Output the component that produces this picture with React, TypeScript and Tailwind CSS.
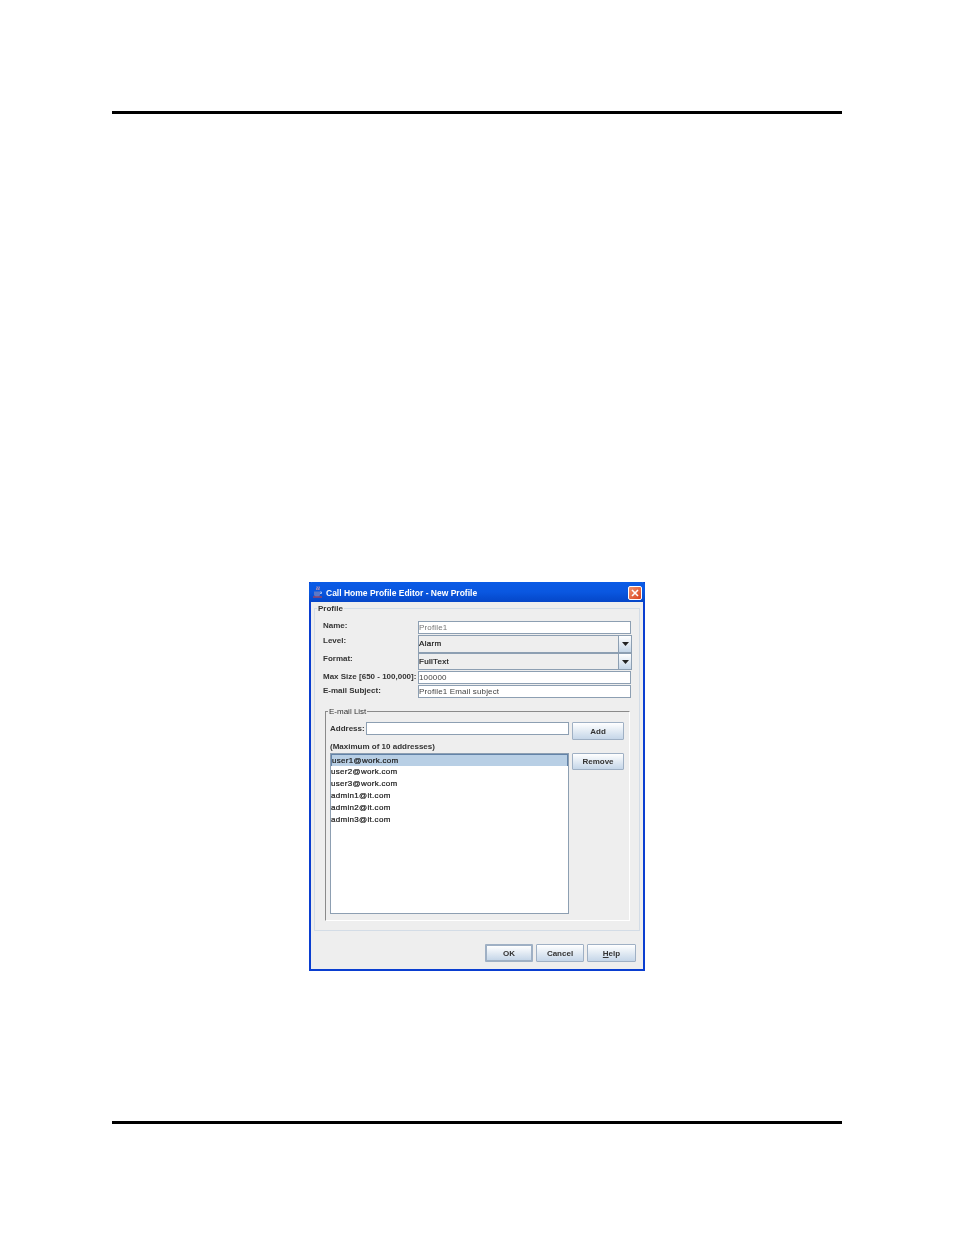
const labelText = "font-['Liberation_Sans',Arial,sans-serif] text-[8px] font-bold text-[#333] leading-[10px]";
const fieldText = "font-['Liberation_Sans',Arial,sans-serif] text-[8px] text-[#444] tracking-[0.15px] leading-[10px]";
const heavyText = "font-['Liberation_Sans',Arial,sans-serif] text-[8px] text-[#111] [-webkit-text-stroke:0.2px_#222]";
const buttonClass =
  "flex items-center justify-center pt-[1px] border border-[#9fb0c4] rounded-[1px] bg-gradient-to-b from-white to-[#c5d6e8] font-['Liberation_Sans',Arial,sans-serif] text-[8px] font-bold text-[#333]";

const addresses = ["user1@work.com", "user2@work.com", "user3@work.com", "admin1@it.com", "admin2@it.com", "admin3@it.com"];

function TextField({ value, dim }: { value: string; dim?: boolean }) {
  return (
    <div className="h-[13px] w-[213px] border border-[#8d9fb2] bg-white flex items-end overflow-hidden">
      <span className={`${fieldText} ${dim ? "text-[#777]" : ""}`}>{value}</span>
    </div>
  );
}

function Combo({ value, height }: { value: string; height: string }) {
  return (
    <div className={`${height} w-[214px] border border-[#8d9fb2] bg-[#eeeeee] flex`}>
      <div className="flex-1 flex items-center">
        <span className={`${heavyText} tracking-[0.3px]`}>{value}</span>
      </div>
      <div className="w-[13px] border-l border-[#8d9fb2] bg-gradient-to-b from-white to-[#c5d6e8] flex items-center justify-center">
        <svg width="7" height="4" viewBox="0 0 7 4">
          <path d="M0 0h7L3.5 4z" fill="#222" />
        </svg>
      </div>
    </div>
  );
}

function Row({ label, labelOffset, className, children }: { label: string; labelOffset: string; className?: string; children: React.ReactNode }) {
  return (
    <div className={`flex items-start ${className ?? ""}`}>
      <div className={`w-[95px] shrink-0 ${labelOffset} ${labelText} whitespace-nowrap`}>{label}</div>
      {children}
    </div>
  );
}

export default function App() {
  return (
    <div className="min-h-[1235px] w-[954px] bg-white pt-[111px]">
      <div className="mx-[112px] h-[3px] bg-black" />

      <div className="mt-[468px] ml-[309px] h-[389px] w-[336px] border-2 border-t-0 border-[#0a3ed0] bg-[#eeeeee] flex flex-col blur-[0.35px]">
        {/* title bar */}
        <div className="-mx-[2px] h-[20px] shrink-0 rounded-t-[3px] bg-gradient-to-b from-[#0a5be6] via-[#0a57e0] to-[#0546c8] flex items-center pl-[4px] pr-[3px]">
          <svg width="9" height="12" viewBox="0 0 9 12" className="mr-[4px]">
            <path d="M4 0.5c1 1-1 2 0 3.5M6 0.5c1 1-1 2 0 3.5" stroke="#f0a0a0" strokeWidth="1" fill="none" />
            <path d="M1 5.5h6v3a2 2 0 0 1-2 2H3a2 2 0 0 1-2-2z" fill="#5a78c8" />
            <path d="M0 11h9" stroke="#e04030" strokeWidth="1" />
            <path d="M7 6h1.5v1.5H7" stroke="#c8d4f0" strokeWidth="0.8" fill="none" />
          </svg>
          <span className="pt-[2px] font-['Liberation_Sans',Arial,sans-serif] text-[8.5px] font-bold text-white whitespace-nowrap">
            Call Home Profile Editor - New Profile
          </span>
          <div className="ml-auto mt-[2px] h-[14px] w-[14px] rounded-[2px] border border-white bg-gradient-to-br from-[#f0906a] to-[#d8401c] flex items-center justify-center">
            <svg width="8" height="8" viewBox="0 0 8 8">
              <path d="M1 1l6 6M7 1L1 7" stroke="white" strokeWidth="1.6" />
            </svg>
          </div>
        </div>

        {/* profile group */}
        <div className="relative mt-[6px] mx-[3px] h-[323px] shrink-0 border border-[#d3dce6] pl-[8px] pt-[12px]">
          <span className={`absolute -top-[5px] left-[2px] bg-[#eeeeee] px-[1px] ${labelText}`}>Profile</span>

          <div className="flex flex-col">
            <Row label="Name:" labelOffset="">
              <TextField value="Profile1" dim />
            </Row>
            <Row label="Level:" labelOffset="mt-[1px]" className="mt-[1px]">
              <Combo value="Alarm" height="h-[18px]" />
            </Row>
            <Row label="Format:" labelOffset="mt-[1px]">
              <Combo value="FullText" height="h-[17px]" />
            </Row>
            <Row label="Max Size [650 - 100,000]:" labelOffset="mt-[1px]" className="mt-[1px]">
              <TextField value="100000" />
            </Row>
            <Row label="E-mail Subject:" labelOffset="mt-[1px]" className="mt-[1px]">
              <TextField value="Profile1 Email subject" />
            </Row>
          </div>

          {/* e-mail list group */}
          <div className="relative mt-[13px] ml-[2px] h-[210px] w-[305px] border-t border-l border-[#8a8a8a] border-b border-b-white border-r border-r-white pl-[4px] pt-[10px]">
            <span className={`absolute -top-[5px] left-[2px] bg-[#eeeeee] px-[1px] ${labelText} font-normal text-[#222]`}>E-mail List</span>

            <div className="flex items-start">
              <div className={`w-[36px] shrink-0 mt-[2px] ${labelText}`}>Address:</div>
              <div className="h-[13px] w-[203px] border border-[#8d9fb2] bg-white" />
              <div className={`${buttonClass} ml-[3px] h-[18px] w-[52px]`}>Add</div>
            </div>

            <div className={`mt-[2px] h-[11px] ${labelText}`}>(Maximum of 10 addresses)</div>

            <div className="flex items-start">
              <div className="h-[161px] w-[239px] border border-[#8d9fb2] bg-white">
                {addresses.map((a, i) => (
                  <div
                    key={a}
                    className={`h-[12px] flex items-center tracking-[0.3px] ${heavyText} ${i === 0 ? "bg-[#b8cfe5] border-l border-t border-r border-[#6383a8]" : ""}`}
                  >
                    {a}
                  </div>
                ))}
              </div>
              <div className={`${buttonClass} ml-[3px] h-[17px] w-[52px]`}>Remove</div>
            </div>
          </div>
        </div>

        {/* dialog buttons */}
        <div className="mt-[13px] mr-[7px] flex justify-end gap-[3px]">
          <div className={`${buttonClass} h-[18px] w-[48px] border-2 border-[#6d8299]`}>OK</div>
          <div className={`${buttonClass} h-[18px] w-[48px]`}>Cancel</div>
          <div className={`${buttonClass} h-[18px] w-[49px]`}>
            <span>
              <span className="underline">H</span>elp
            </span>
          </div>
        </div>
      </div>

      <div className="mt-[150px] mx-[112px] h-[3px] bg-black" />
    </div>
  );
}
